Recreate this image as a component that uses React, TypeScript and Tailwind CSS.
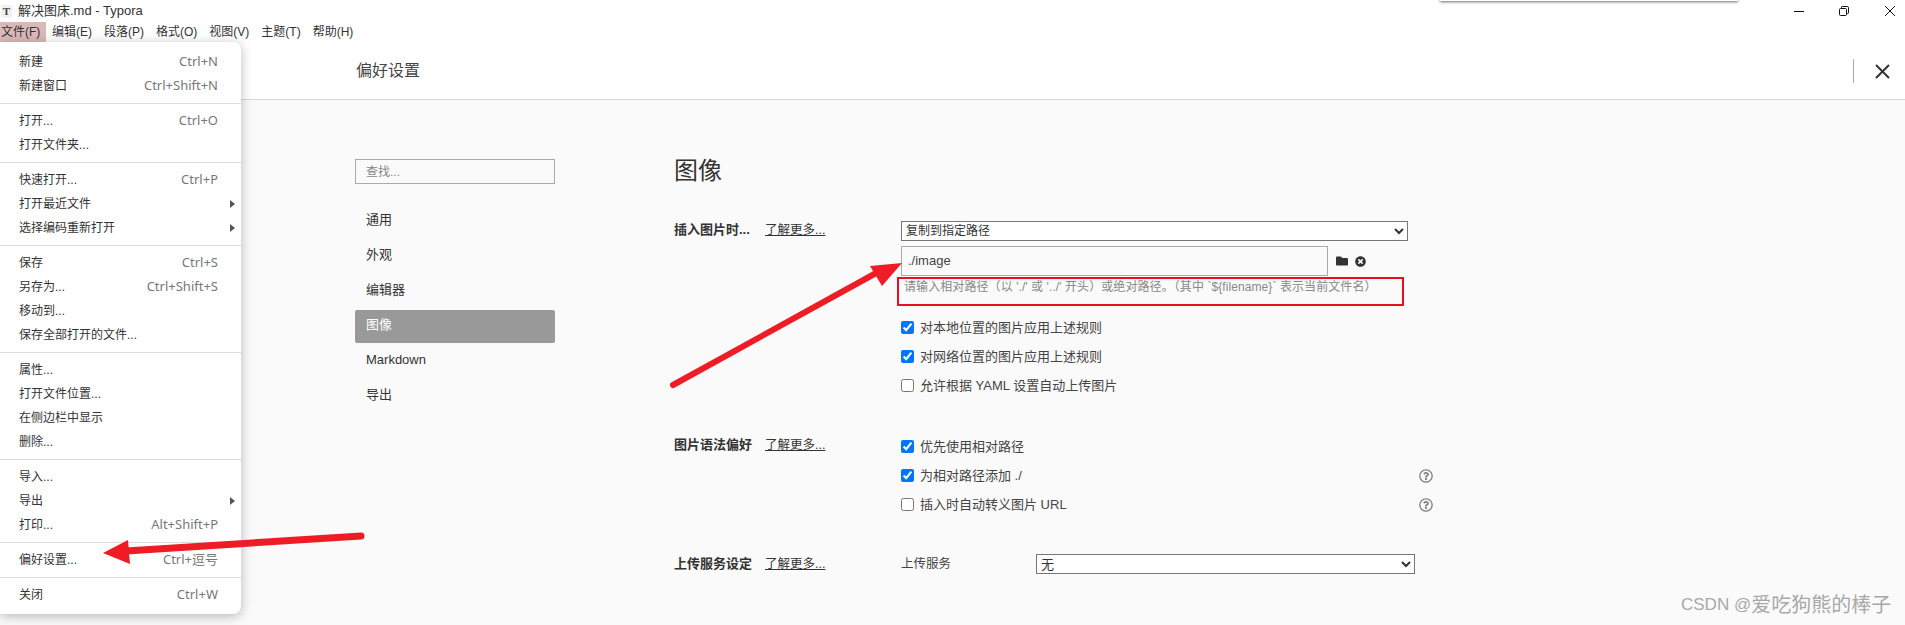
import { FaFolder, FaTimesCircle, FaRegQuestionCircle } from "react-icons/fa";

const sans = "font-['Liberation_Sans','Noto_Sans_CJK_SC',sans-serif]";

type MenuEntry = { label: string; keys?: string; sub?: boolean };

const fileMenu: MenuEntry[][] = [
  [{ label: "新建", keys: "Ctrl+N" }, { label: "新建窗口", keys: "Ctrl+Shift+N" }],
  [{ label: "打开...", keys: "Ctrl+O" }, { label: "打开文件夹..." }],
  [{ label: "快速打开...", keys: "Ctrl+P" }, { label: "打开最近文件", sub: true }, { label: "选择编码重新打开", sub: true }],
  [{ label: "保存", keys: "Ctrl+S" }, { label: "另存为...", keys: "Ctrl+Shift+S" }, { label: "移动到..." }, { label: "保存全部打开的文件..." }],
  [{ label: "属性..." }, { label: "打开文件位置..." }, { label: "在侧边栏中显示" }, { label: "删除..." }],
  [{ label: "导入..." }, { label: "导出", sub: true }, { label: "打印...", keys: "Alt+Shift+P" }],
  [{ label: "偏好设置...", keys: "Ctrl+逗号" }],
  [{ label: "关闭", keys: "Ctrl+W" }],
];

const menuBar = ["文件(F)", "编辑(E)", "段落(P)", "格式(O)", "视图(V)", "主题(T)", "帮助(H)"];
const navItems = ["通用", "外观", "编辑器", "图像", "Markdown", "导出"];

function FileMenu() {
  return (
    <div className="absolute left-0 top-[42px] z-10 w-[241px] rounded-r-[8px] bg-white py-[8px] pb-[7px] shadow-[0_2px_12px_rgba(0,0,0,0.28)]">
      {fileMenu.map((group, i) => (
        <div key={i}>
          {i > 0 && (
            <div className="flex h-[11px] items-center">
              <div className="h-px w-full bg-[#dcdcdc]" />
            </div>
          )}
          {group.map((item) => (
            <div key={item.label} className="relative flex h-[24px] items-center justify-between pl-[19px] pr-[23px]">
              <span className="text-[#333]">{item.label}</span>
              {item.keys && (
                <span className="font-['Noto_Sans','Noto_Sans_CJK_SC',sans-serif] text-[13px] text-[#777]">{item.keys}</span>
              )}
              {item.sub && (
                <span className="absolute right-[6px] top-[8px] h-0 w-0 border-y-[4px] border-l-[5px] border-y-transparent border-l-[#555]" />
              )}
            </div>
          ))}
        </div>
      ))}
    </div>
  );
}

function TitleBar() {
  return (
    <div className="flex h-[22px] items-center bg-white">
      <span className="ml-px flex h-[13px] w-[11px] items-center justify-center bg-[#f1f1f1] font-['Liberation_Serif',serif] text-[11px] font-bold text-[#444]">
        T
      </span>
      <span className="ml-[6px] text-[13px] text-[#333]">解决图床.md - Typora</span>
      <div className="ml-auto mr-[10px] flex items-center">
        <svg width="10" height="10" viewBox="0 0 10 10" className="mr-[35px]">
          <path d="M0 5.5h10" stroke="#111" strokeWidth="1" />
        </svg>
        <svg width="10" height="10" viewBox="0 0 10 10" className="mr-[36px]">
          <path d="M2.5 2V1.2Q2.5 .5 3.2 .5H8.3Q9.5 .5 9.5 1.7V6.8Q9.5 7.5 8.8 7.5H8" fill="none" stroke="#111" />
          <rect x=".5" y="2.5" width="7" height="7" rx="1" fill="none" stroke="#111" />
        </svg>
        <svg width="10" height="10" viewBox="0 0 10 10">
          <path d="M0 0L10 10M10 0L0 10" stroke="#111" strokeWidth="1" />
        </svg>
      </div>
    </div>
  );
}

function MenuBar() {
  return (
    <div className="flex h-[20px] items-center bg-white text-[#333]">
      {menuBar.map((m, i) => (
        <span
          key={m}
          className={
            i === 0
              ? "flex h-[20px] w-[46px] items-center pl-px bg-[#dcb9b9]"
              : "ml-[5px] mr-[1px] flex h-[20px] items-center pr-[5px] pl-px"
          }
        >
          {m}
        </span>
      ))}
    </div>
  );
}

function Check({ label, checked, help }: { label: string; checked?: boolean; help?: boolean }) {
  return (
    <div className="flex h-[29px] w-[532px] items-center">
      <input type="checkbox" defaultChecked={checked} className="m-0 h-[13px] w-[13px]" />
      <span className="ml-[6px] text-[13px] text-[#444]">{label}</span>
      {help && <FaRegQuestionCircle className="ml-auto text-[14px] text-[#808080]" />}
    </div>
  );
}

function SectionLabel({ title }: { title: string }) {
  return (
    <div className="flex w-[227px] shrink-0 items-center text-[13px]">
      <span className="w-[91px] font-bold text-[#333]">{title}</span>
      <span className="text-[12.5px] text-[#333] underline">了解更多...</span>
    </div>
  );
}

function Preferences() {
  return (
    <div className="relative h-[583px] bg-[#fafafa]">
      <header className="flex h-[58px] items-center border-b border-[#d8d8d8] bg-white pl-[356px] pr-[15px] pt-[1px]">
        <span className="text-[16px] text-[#444]">偏好设置</span>
        <div className="ml-auto h-[24px] w-px bg-[#aaa]" />
        <svg width="15" height="15" viewBox="0 0 15 15" className="ml-[21px]">
          <path d="M1 1L14 14M14 1L1 14" stroke="#333" strokeWidth="2" />
        </svg>
      </header>

      <div className="flex pl-[355px] pt-[59px]">
        <nav className="w-[200px] shrink-0">
          <div className="mb-[21px] flex h-[25px] items-center border border-[#aaa] pl-[10px] text-[12px] text-[#888]">
            查找...
          </div>
          <div className="flex flex-col gap-[2px] text-[13px] text-[#333]">
            {navItems.map((n) => (
              <div
                key={n}
                className={
                  n === "图像"
                    ? "flex h-[33px] items-center rounded-[2px] bg-[#999] pb-[3px] pl-[11px] text-white"
                    : "flex h-[33px] items-center pb-[3px] pl-[11px]"
                }
              >
                {n}
              </div>
            ))}
          </div>
        </nav>

        <main className="ml-[119px]">
          <h1 className="mt-[-2px] h-[28px] text-[24px] leading-[28px] text-[#333]">图像</h1>

          <section className="mt-[36px] flex">
            <div className="flex h-[18px] items-center">
              <SectionLabel title="插入图片时..." />
            </div>
            <div>
              <select className="block h-[20px] w-[507px] border border-[#767676] bg-white text-[12px] text-[#333]">
                <option>复制到指定路径</option>
              </select>
              <div className="mt-[5px] flex items-center">
                <div className="flex h-[30px] w-[427px] items-center border border-[#aaa] pl-[6px] text-[13px] text-[#444]">
                  ./image
                </div>
                <FaFolder className="ml-[8px] text-[12px] text-[#333]" />
                <FaTimesCircle className="ml-[7px] text-[11px] text-[#333]" />
              </div>
              <div className="ml-[3px] mt-[3px] h-[16px] text-[12px] leading-[16px] tracking-[0.08px] text-[#888]">
                请输入相对路径（以 './' 或 '../' 开头）或绝对路径。（其中 `${"{filename}"}` 表示当前文件名）
              </div>
              <div className="mt-[18px]">
                <Check label="对本地位置的图片应用上述规则" checked />
                <Check label="对网络位置的图片应用上述规则" checked />
                <Check label="允许根据 YAML 设置自动上传图片" />
              </div>
            </div>
          </section>

          <section className="mt-[32px] flex">
            <div className="flex h-[26px] items-center self-start">
              <SectionLabel title="图片语法偏好" />
            </div>
            <div>
              <Check label="优先使用相对路径" checked />
              <Check label="为相对路径添加 ./" checked help />
              <Check label="插入时自动转义图片 URL" help />
            </div>
          </section>

          <section className="mt-[35px] flex items-center">
            <SectionLabel title="上传服务设定" />
            <span className="w-[135px] text-[12.5px] text-[#444]">上传服务</span>
            <select className="block h-[20px] w-[379px] border border-[#767676] bg-white text-[13px] text-[#333]">
              <option>无</option>
            </select>
          </section>
        </main>
      </div>
    </div>
  );
}

export default function App() {
  return (
    <div className={`relative h-[625px] w-[1905px] overflow-hidden bg-white text-[12px] ${sans}`}>
      <TitleBar />
      <MenuBar />
      <Preferences />
      <FileMenu />

      {/* edge of another window peeking in at the top */}
      <div className="absolute left-[1440px] top-[-2px] h-[3px] w-[298px] bg-white shadow-[0_1px_3px_rgba(0,0,0,0.6)]" />

      {/* highlight around the path hint */}
      <div className="absolute left-[897px] top-[277px] h-[29px] w-[507px] border-2 border-[#e60f24]" />

      {/* hand-drawn annotation arrows */}
      <svg className="absolute left-0 top-0 z-20" width="1905" height="625" viewBox="0 0 1905 625">
        <path d="M361 536L126 551" stroke="#ee1c25" strokeWidth="7" strokeLinecap="round" fill="none" />
        <polygon points="103,553 128,540 130,564" fill="#ee1c25" />
        <path d="M673 385L878 272" stroke="#ee1c25" strokeWidth="6" strokeLinecap="round" fill="none" />
        <polygon points="902,263 870,266 882,286" fill="#ee1c25" />
      </svg>

      {/* author watermark */}
      <div className="absolute left-[1681px] top-[592px] flex h-[26px] items-center text-[#a8a8a8]">
        <span className="text-[17px]">CSDN @</span>
        <span className="text-[20px]">爱吃狗熊的棒子</span>
      </div>
    </div>
  );
}
